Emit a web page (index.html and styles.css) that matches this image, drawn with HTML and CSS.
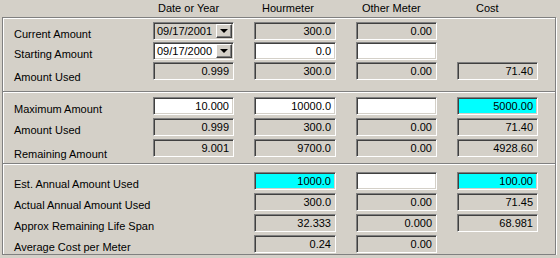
FILE: index.html
```html
<!DOCTYPE html>
<html lang="en">
<head>
  <meta charset="UTF-8">
  <title>Meter Usage</title>
  <link rel="stylesheet" href="styles.css">
</head>
<body>
  <div class="sheet">
    <div class="heads">
      <div></div>
      <div class="head head-date">Date or Year</div>
      <div class="head head-hour">Hourmeter</div>
      <div class="head head-other">Other Meter</div>
      <div class="head head-cost">Cost</div>
    </div>

    <div class="frame">
      <!-- Amount since start -->
      <div class="panel panel-one">
        <div class="label">Current Amount</div>
        <div class="field combo"><span>09/17/2001</span><span class="drop"><i></i></span></div>
        <div class="field">300.0</div>
        <div class="field">0.00</div>
        <div></div>

        <div class="label">Starting Amount</div>
        <div class="field combo edit"><span>09/17/2000</span><span class="drop"><i></i></span></div>
        <div class="field edit">0.0</div>
        <div class="field edit"></div>
        <div></div>

        <div class="label low">Amount Used</div>
        <div class="field">0.999</div>
        <div class="field">300.0</div>
        <div class="field">0.00</div>
        <div class="field">71.40</div>
      </div>

      <!-- Limits -->
      <div class="panel panel-two">
        <div class="label">Maximum Amount</div>
        <div class="field edit">10.000</div>
        <div class="field edit">10000.0</div>
        <div class="field edit"></div>
        <div class="field cyan">5000.00</div>

        <div class="label">Amount Used</div>
        <div class="field">0.999</div>
        <div class="field">300.0</div>
        <div class="field">0.00</div>
        <div class="field">71.40</div>

        <div class="label low">Remaining Amount</div>
        <div class="field">9.001</div>
        <div class="field">9700.0</div>
        <div class="field">0.00</div>
        <div class="field">4928.60</div>
      </div>

      <!-- Annual figures -->
      <div class="panel panel-three">
        <div class="label">Est. Annual Amount Used</div>
        <div></div>
        <div class="field cyan">1000.0</div>
        <div class="field edit"></div>
        <div class="field cyan">100.00</div>

        <div class="label">Actual Annual Amount Used</div>
        <div></div>
        <div class="field">300.0</div>
        <div class="field">0.00</div>
        <div class="field">71.45</div>

        <div class="label">Approx Remaining Life Span</div>
        <div></div>
        <div class="field">32.333</div>
        <div class="field">0.000</div>
        <div class="field">68.981</div>

        <div class="label">Average Cost per Meter</div>
        <div></div>
        <div class="field">0.24</div>
        <div class="field">0.00</div>
        <div></div>
      </div>
    </div>
  </div>
</body>
</html>
```

FILE: styles.css
```css
body {
  margin: 0;
  background: #d4d0c8;
  color: #000;
  font-family: "Liberation Sans", Arial, sans-serif;
  font-size: 11px;
}

.sheet {
  width: 554px;
  margin-left: 2px;
}

.heads,
.panel {
  display: grid;
  grid-template-columns: 119px 81px 82px 81px 81px;
  column-gap: 20px;
  padding-left: 11px;
}

.heads {
  height: 17px;
  line-height: 17px;
}

.head-date { padding-left: 6px; }
.head-hour { padding-left: 9px; }
.head-other { padding-left: 7px; }
.head-cost { padding-left: 20px; }

.frame {
  border: 1px solid #808080;
  box-shadow: inset 1px 1px 0 #fff, 1px 1px 0 #fff;
  height: 238px;
  box-sizing: border-box;
}

.panel {
  grid-auto-rows: 18px;
  row-gap: 2px;
}

.panel-one {
  padding-top: 4px;
  padding-bottom: 11px;
}

.panel-two {
  border-top: 1px solid #808080;
  box-shadow: inset 0 1px 0 #fff;
  padding-top: 5px;
  padding-bottom: 6px;
  row-gap: 3px;
}

.panel-three {
  border-top: 1px solid #808080;
  box-shadow: inset 0 1px 0 #fff;
  padding-top: 8px;
  row-gap: 3px;
}

.label {
  align-self: end;
  margin-bottom: 0;
  white-space: nowrap;
}

.label.low {
  margin-bottom: -3px;
}

.field {
  box-sizing: border-box;
  height: 18px;
  border: 1px solid;
  border-color: #808080 #fff #fff #808080;
  box-shadow: inset 1px 1px 0 #404040, inset -1px -1px 0 #d4d0c8;
  background: #d4d0c8;
  text-align: right;
  padding: 0 4px 0 2px;
  line-height: 16px;
}

.field.edit {
  background: #fff;
}

.field.cyan {
  background: #00ffff;
}

.combo {
  display: flex;
  justify-content: space-between;
  padding: 0;
  text-align: left;
}

.combo span:first-child {
  padding-left: 3px;
  line-height: 17px;
}

.drop {
  width: 16px;
  height: 14px;
  margin: 1px 1px 0 0;
  box-sizing: border-box;
  background: #d4d0c8;
  border: 1px solid;
  border-color: #fff #404040 #404040 #fff;
  box-shadow: inset -1px -1px 0 #808080;
  display: flex;
  align-items: center;
  justify-content: center;
}

.drop i {
  width: 0;
  height: 0;
  border-left: 4px solid transparent;
  border-right: 4px solid transparent;
  border-top: 4px solid #000;
}
```
